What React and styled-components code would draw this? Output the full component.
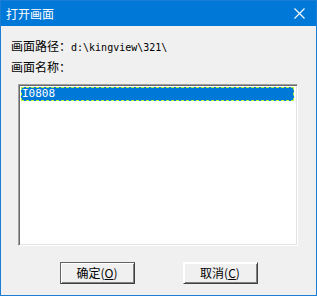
import React from "react";
import styled, { createGlobalStyle } from "styled-components";

const GlobalStyle = createGlobalStyle`
  html, body {
    margin: 0;
    padding: 0;
    background: #f0f0f0;
  }
`;

const Window = styled.div`
  box-sizing: border-box;
  width: 317px;
  height: 296px;
  border: 1px solid #1a7fd4;
  background: #f0f0f0;
  display: flex;
  flex-direction: column;
  font-family: "Noto Sans CJK SC", "Liberation Sans", sans-serif;
  font-size: 12px;
  color: #000;
`;

const TitleBar = styled.div`
  height: 25px;
  background: #0078d7;
  display: flex;
  align-items: center;
  justify-content: space-between;
  padding: 0 11px 0 5px;
  color: #fff;
  font-size: 12px;
`;

const Title = styled.span`
  line-height: 25px;
`;

const Body = styled.div`
  display: flex;
  flex-direction: column;
  padding: 9px 10px 0 10px;
`;

const Label = styled.div`
  height: 21px;
  line-height: 21px;
  white-space: nowrap;
`;

const Mono = styled.span`
  font-family: "DejaVu Sans Mono", monospace;
  font-size: 10px;
`;

const ListBox = styled.div`
  box-sizing: border-box;
  margin: 7px 0 0 7px;
  width: 280px;
  height: 162px;
  background: #fff;
  border-top: 1px solid #a0a0a0;
  border-left: 1px solid #a0a0a0;
  border-right: 1px solid #fff;
  border-bottom: 1px solid #fff;
  box-shadow: inset 1px 1px 0 #696969, inset -1px -1px 0 #e3e3e3;
  padding: 2px 3px 2px 2px;
`;

const Item = styled.div`
  box-sizing: border-box;
  height: 14px;
  background: ${(p) => (p.selected ? "#0078d7" : "transparent")};
  color: ${(p) => (p.selected ? "#fff" : "#000")};
  border: 1px dashed ${(p) => (p.selected ? "#b4f53c" : "transparent")};
  font-family: "DejaVu Sans Mono", monospace;
  font-size: 11px;
  line-height: 12px;
  padding-left: 0;
`;

const ButtonRow = styled.div`
  display: flex;
  justify-content: center;
  gap: 48px;
  margin-top: 16px;
`;

const Button = styled.button`
  box-sizing: border-box;
  width: 75px;
  height: 22px;
  padding: 0;
  background: #f0f0f0;
  font-family: "Noto Sans CJK SC", "Liberation Sans", sans-serif;
  font-size: 12px;
  color: #000;
  border: 1px solid ${(p) => (p.primary ? "#646464" : "#f0f0f0")};
  border-top-color: ${(p) => (p.primary ? "#646464" : "#fff")};
  border-left-color: ${(p) => (p.primary ? "#646464" : "#fff")};
  border-right-color: #404040;
  border-bottom-color: #404040;
  box-shadow: inset 1px 1px 0 #fff, inset -1px -1px 0 #808080;
  line-height: 18px;
  u {
    text-decoration: underline;
  }
`;

const CloseIcon = () => (
  <svg width="11" height="11" viewBox="0 0 11 11">
    <path d="M0.5 0.5 L10.5 10.5 M10.5 0.5 L0.5 10.5" stroke="#fff" strokeWidth="1.1" />
  </svg>
);

export default function App() {
  return (
    <>
      <GlobalStyle />
      <Window>
        <TitleBar>
          <Title>打开画面</Title>
          <CloseIcon />
        </TitleBar>
        <Body>
          <Label>
            画面路径：<Mono>d:\kingview\321\</Mono>
          </Label>
          <Label>画面名称：</Label>
          <ListBox>
            <Item selected>I0808</Item>
          </ListBox>
          <ButtonRow>
            <Button primary>
              确定(<u>O</u>)
            </Button>
            <Button>
              取消(<u>C</u>)
            </Button>
          </ButtonRow>
        </Body>
      </Window>
    </>
  );
}
